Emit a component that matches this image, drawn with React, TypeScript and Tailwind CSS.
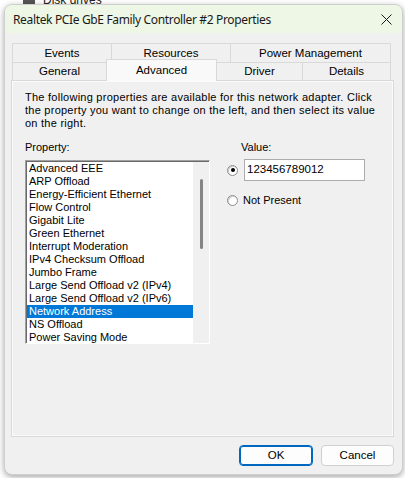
import React from 'react';

const properties = [
  'Advanced EEE',
  'ARP Offload',
  'Energy-Efficient Ethernet',
  'Flow Control',
  'Gigabit Lite',
  'Green Ethernet',
  'Interrupt Moderation',
  'IPv4 Checksum Offload',
  'Jumbo Frame',
  'Large Send Offload v2 (IPv4)',
  'Large Send Offload v2 (IPv6)',
  'Network Address',
  'NS Offload',
  'Power Saving Mode',
];

const selected = 'Network Address';

const Tab: React.FC<{ label: string; width: string; first?: boolean; active?: boolean }> = ({ label, width, first, active }) => {
  if (active) {
    return (
      <div className={`${width} relative z-10 -ml-px -mt-[3px] -mb-px h-[22px] border border-b-0 border-[#d9d9d9] bg-[#f9f9f9] flex items-start justify-center pt-[2px]`}>
        {label}
      </div>
    );
  }
  return (
    <div className={`${width} h-full border border-b-0 border-[#d9d9d9] bg-[#f0f0f0] flex items-center justify-center pt-[1px] ${first ? '' : '-ml-px'}`}>
      {label}
    </div>
  );
};

const Radio: React.FC<{ checked?: boolean }> = ({ checked }) => (
  <div className="w-[11px] h-[11px] rounded-full border border-[#8c8c8c] bg-white shadow-[inset_1px_1px_0_#d0d0d0] flex items-center justify-center">
    {checked && <div className="w-[4px] h-[4px] rounded-full bg-black" />}
  </div>
);

export default function App() {
  return (
    <div className="w-[405px] h-[478px] overflow-hidden bg-white relative font-['Liberation_Sans',Arial,sans-serif] text-[11px] text-black">
      {/* window behind */}
      <div className="absolute top-[-9px] left-[23px] flex items-center gap-[8px] text-[12px] text-[#222]">
        <div className="w-[12px] h-[10px] bg-[#555] rounded-[1px]" />
        <span>Disk drives</span>
      </div>

      <div className="relative mt-[4px] ml-[4px] w-[399px] h-[471px] rounded-[8px] border border-[#cfcfcf] bg-[#f0f0f0] overflow-hidden shadow-[0_2px_6px_rgba(0,0,0,0.35)]">
        {/* title bar */}
        <div className="h-[28px] bg-[#eef6e5] flex items-center justify-between pl-[8px] pr-[10px] pt-[1px]">
          <span className="text-[12px] text-[#1a1a1a] font-['Noto_Sans',sans-serif] tracking-[-0.35px]">Realtek PCIe GbE Family Controller #2 Properties</span>
          <svg width="11" height="11" viewBox="0 0 11 11">
            <path d="M0.5 0.5 L10.5 10.5 M10.5 0.5 L0.5 10.5" stroke="#1a1a1a" strokeWidth="1" />
          </svg>
        </div>

        <div className="pl-[6px] pt-[10px]">
          {/* tabs */}
          <div className="pl-[1px] text-[11.5px]">
            <div className="flex h-[19px]">
              <Tab label="Events" width="w-[100px]" first />
              <Tab label="Resources" width="w-[120px]" />
              <Tab label="Power Management" width="w-[161px]" />
            </div>
            <div className="flex h-[18px]">
              <Tab label="General" width="w-[95px]" first />
              <Tab label="Advanced" width="w-[111px]" active />
              <Tab label="Driver" width="w-[87px]" />
              <Tab label="Details" width="w-[89px]" />
            </div>
          </div>

          {/* panel */}
          <div className="w-[383px] h-[357px] border border-[#d9d9d9] bg-[#f0f0f0] shadow-[inset_0_0_0_1px_#fbfbfb] pl-[13px] pt-[10px]">
            <p className="leading-[13px] w-[358px] tracking-[0.25px]">
              The following properties are available for this network adapter. Click the property you want to change on the left, and then select its value on the right.
            </p>

            <div className="flex mt-[11px]">
              <div className="w-[185px]">
                <div className="leading-[13px] mb-[6px]">Property:</div>
                <div className="h-[184px] border border-t-[#a0a0a0] border-l-[#a0a0a0] border-r-white border-b-white shadow-[inset_1px_1px_0_#696969] bg-white flex">
                  <div className="flex-1 pt-[1px] pl-[1px]">
                    {properties.map(p => (
                      <div
                        key={p}
                        className={`h-[13px] leading-[13px] pl-[2px] whitespace-nowrap ${p === selected ? 'bg-[#0078d7] text-white' : ''}`}
                      >
                        {p}
                      </div>
                    ))}
                  </div>
                  <div className="w-[16px] bg-[#f0f0f0] mt-[1px] flex justify-center pt-[17px]">
                    <div className="w-[3px] h-[70px] rounded-full bg-[#858585]" />
                  </div>
                </div>
              </div>

              <div className="ml-[17px]">
                <div className="leading-[13px] ml-[14px] mb-[5px]">Value:</div>
                <div className="flex items-center gap-[6px]">
                  <Radio checked />
                  <div className="w-[121px] h-[22px] border border-[#adadad] bg-white flex items-center pl-[2px] text-[11.5px]">
                    123456789012
                  </div>
                </div>
                <div className="flex items-center gap-[5px] mt-[11px]">
                  <Radio />
                  <span>Not Present</span>
                </div>
              </div>
            </div>
          </div>
        </div>

        {/* buttons */}
        <div className="flex justify-end gap-[8px] pr-[8px] mt-[8px] text-[11.5px]">
          <button className="w-[74px] h-[21px] rounded-[4px] border border-[#0067c0] bg-[#fdfdfd] shadow-[inset_0_0_0_1px_#0067c0]">OK</button>
          <button className="w-[73px] h-[21px] rounded-[4px] border border-[#d0d0d0] bg-[#fdfdfd]">Cancel</button>
        </div>
      </div>
    </div>
  );
}
